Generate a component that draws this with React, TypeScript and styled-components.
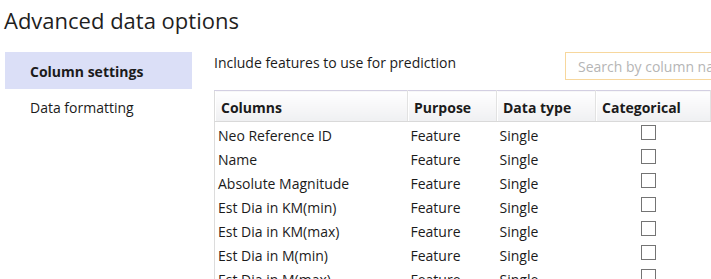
import React from 'react';
import styled, { createGlobalStyle } from 'styled-components';

const GlobalStyle = createGlobalStyle`
  html, body {
    margin: 0;
    padding: 0;
    background: #ffffff;
    overflow: hidden;
  }
  body {
    font-family: 'Open Sans', 'Noto Sans', sans-serif;
    color: #1b1b1b;
  }
`;

const Page = styled.div`
  width: 711px;
  height: 279px;
  overflow: hidden;
`;

const Title = styled.h1`
  margin: 0;
  padding: 5px 0 0 4px;
  height: 47px;
  box-sizing: border-box;
  font-size: 22px;
  font-weight: 400;
  color: #1f1f1f;
  line-height: 30px;
  white-space: nowrap;
`;

const Body = styled.div`
  display: flex;
  padding-left: 5px;
`;

const Sidebar = styled.nav`
  width: 187px;
  flex-shrink: 0;
  display: flex;
  flex-direction: column;
  padding-top: 5px;
`;

const NavItem = styled.div<{ active?: boolean }>`
  height: 37px;
  display: flex;
  align-items: center;
  padding-left: 25px;
  padding-top: ${(p) => (p.active ? 1 : 0)}px;
  box-sizing: border-box;
  font-size: 14px;
  font-weight: ${(p) => (p.active ? 700 : 400)};
  background: ${(p) => (p.active ? '#dbdff7' : 'transparent')};
  color: #1b1b1b;
  white-space: nowrap;
`;

const Main = styled.div`
  margin-left: 22px;
  width: 560px;
  flex-shrink: 0;
  padding-top: 5px;
`;

const TopRow = styled.div`
  display: flex;
  align-items: flex-start;
  justify-content: space-between;
  height: 28px;
  margin-bottom: 10px;
`;

const Hint = styled.div`
  font-size: 14px;
  line-height: 22px;
  white-space: nowrap;
`;

const Search = styled.input`
  width: 209px;
  height: 28px;
  box-sizing: border-box;
  border: 1px solid #f7d79d;
  padding: 0 12px;
  font-family: inherit;
  font-size: 14px;
  color: #1b1b1b;
  outline: none;
  &::placeholder {
    color: #b5b5b5;
  }
`;

const Table = styled.table`
  border-collapse: collapse;
  table-layout: fixed;
  width: 620px;
  border-top: 1px solid #d3cfe2;
  border-left: 1px solid #dcdcdc;
`;

const HeadCell = styled.th<{ w: number }>`
  width: ${(p) => p.w}px;
  height: 31px;
  box-sizing: border-box;
  padding: 3px 6px 0;
  text-align: left;
  font-size: 14px;
  font-weight: 700;
  color: #1b1b1b;
  background: linear-gradient(to bottom, #ffffff, #eff0f2);
  border-bottom: 1px solid #d9d9d9;
  border-right: 1px solid #e2e2e2;
  box-shadow: inset 1px 0 0 #ffffff;
  white-space: nowrap;
`;

const Cell = styled.td<{ pad?: number }>`
  height: 24px;
  box-sizing: border-box;
  padding: 3px 0 0 ${(p) => p.pad ?? 3}px;
  font-size: 14px;
  line-height: 21px;
  white-space: nowrap;
  overflow: hidden;
  vertical-align: top;
`;

const Box = styled.span`
  display: block;
  width: 15px;
  height: 15px;
  box-sizing: border-box;
  border: 1px solid #747474;
  margin-top: 0;
  background: #ffffff;
`;

const rows = [
  'Neo Reference ID',
  'Name',
  'Absolute Magnitude',
  'Est Dia in KM(min)',
  'Est Dia in KM(max)',
  'Est Dia in M(min)',
  'Est Dia in M(max)',
];

const App = () => {
  return (
    <Page>
      <GlobalStyle />
      <Title>Advanced data options</Title>
      <Body>
        <Sidebar>
          <NavItem active>Column settings</NavItem>
          <NavItem>Data formatting</NavItem>
        </Sidebar>
        <Main>
          <TopRow>
            <Hint>Include features to use for prediction</Hint>
            <Search placeholder="Search by column name" />
          </TopRow>
          <Table>
            <thead>
              <tr>
                <HeadCell w={193}>Columns</HeadCell>
                <HeadCell w={89}>Purpose</HeadCell>
                <HeadCell w={99}>Data type</HeadCell>
                <HeadCell w={115}>Categorical</HeadCell>
                <HeadCell w={124}></HeadCell>
              </tr>
            </thead>
            <tbody>
              {rows.map((name) => (
                <tr key={name}>
                  <Cell>{name}</Cell>
                  <Cell>Feature</Cell>
                  <Cell>Single</Cell>
                  <Cell pad={45}>
                    <Box />
                  </Cell>
                  <Cell />
                </tr>
              ))}
            </tbody>
          </Table>
        </Main>
      </Body>
    </Page>
  );
};

export default App;
